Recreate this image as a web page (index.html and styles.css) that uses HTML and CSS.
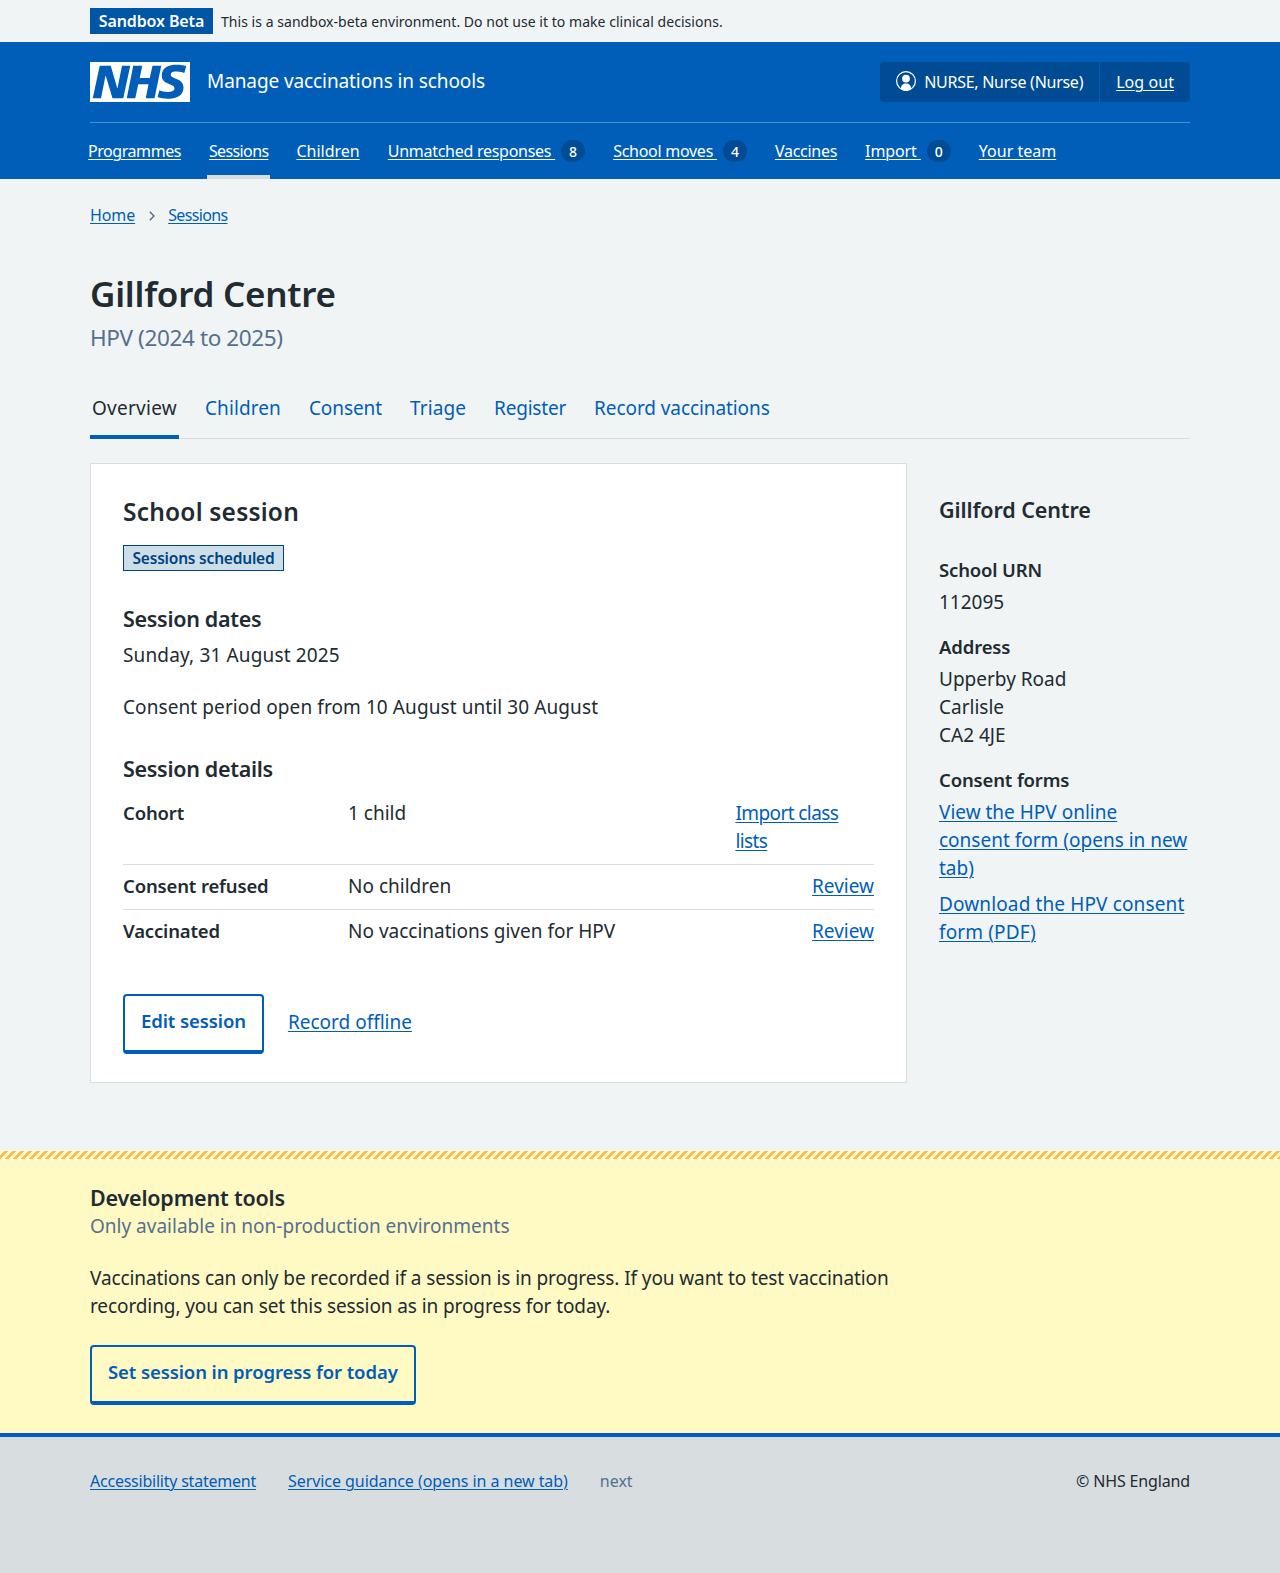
FILE: index.html
```html
<!DOCTYPE html>
<html lang="en">
<head>
<meta charset="utf-8">
<title>Gillford Centre – Manage vaccinations in schools</title>
<link rel="stylesheet" href="styles.css">
</head>
<body>
<div class="environment">
  <div class="container environment-row">
    <strong class="environment-tag">Sandbox Beta</strong>
    <span class="environment-text">This is a sandbox-beta environment. Do not use it to make clinical decisions.</span>
  </div>
</div>

<header class="header">
  <div class="container">
    <div class="header-row">
      <a class="header-brand" href="#">
        <svg class="logo" viewBox="0 0 40 16" width="100" height="40" role="img" aria-label="NHS">
          <path fill="#fff" d="M0 0h40v16H0z"/>
          <path fill="#005eb8" d="M3.9 1.5h4.4l2.6 9h.1l1.8-9h3.3l-2.8 13H9l-2.7-9h-.1l-1.8 9H1.1M17.3 1.5h3.6l-1 4.9h4L25 1.5h3.5l-2.7 13h-3.5l1.1-5.6h-4.1l-1.2 5.6h-3.4M37.7 4.4c-.7-.3-1.6-.6-2.9-.6-1.4 0-2.5.2-2.5 1.3 0 1.8 5.1 1.2 5.1 5.1 0 3.6-3.3 4.5-6.4 4.5-1.3 0-2.9-.3-4-.7l.8-2.7c.7.4 2.1.7 3.2.7s2.8-.2 2.8-1.5c0-2.1-5.1-1.3-5.1-5 0-3.4 2.9-4.4 5.8-4.4 1.6 0 3.1.2 4 .6"/>
        </svg>
        <span class="service-name">Manage vaccinations in schools</span>
      </a>
      <div class="account">
        <span class="account-item">
          <svg class="account-icon" viewBox="0 0 20 20" width="20" height="20" aria-hidden="true">
            <circle cx="10" cy="10" r="9.4" fill="none" stroke="#fff" stroke-width="1.2"/>
            <circle cx="10" cy="7.6" r="3.9" fill="#fff"/>
            <path fill="#fff" d="M5 18.4v-1.2c0-2.7 2.1-4.7 5-4.7s5 2 5 4.7v1.2c-1.400.8-3.200 1.300-5 1.300s-3.600-.5-5-1.300z"/>
          </svg>
          <span class="account-name">NURSE, Nurse (Nurse)</span>
        </span>
        <a class="account-item account-link" href="#">Log out</a>
      </div>
    </div>
    <ul class="nav">
      <li class="nav-item"><a class="nav-link nav-programmes" href="#">Programmes</a></li>
      <li class="nav-item nav-current"><a class="nav-link nav-sessions" href="#">Sessions</a></li>
      <li class="nav-item"><a class="nav-link" href="#">Children</a></li>
      <li class="nav-item"><a class="nav-link nav-unmatched" href="#">Unmatched responses </a><span class="count">8</span></li>
      <li class="nav-item"><a class="nav-link nav-moves" href="#">School moves </a><span class="count">4</span></li>
      <li class="nav-item"><a class="nav-link nav-vaccines" href="#">Vaccines</a></li>
      <li class="nav-item"><a class="nav-link nav-import" href="#">Import </a><span class="count">0</span></li>
      <li class="nav-item"><a class="nav-link" href="#">Your team</a></li>
    </ul>
  </div>
</header>

<main class="container main">
  <nav class="breadcrumb">
    <a href="#">Home</a>
    <svg class="chevron" viewBox="0 0 6 10" width="6" height="10" aria-hidden="true"><path d="M.8.8 5 5 .8 9.200" fill="none" stroke="#4c6272" stroke-width="1.300"/></svg>
    <a class="crumb-sessions" href="#">Sessions</a>
  </nav>

  <h1 class="title">Gillford Centre</h1>
  <p class="caption">HPV (2024 to 2025)</p>

  <ul class="tabs">
    <li><a class="tab tab-current" href="#">Overview</a></li>
    <li><a class="tab" href="#">Children</a></li>
    <li><a class="tab tab-tight" href="#">Consent</a></li>
    <li><a class="tab" href="#">Triage</a></li>
    <li><a class="tab tab-register" href="#">Register</a></li>
    <li><a class="tab tab-tight" href="#">Record vaccinations</a></li>
  </ul>

  <div class="columns">
    <section class="card">
      <h2 class="card-title">School session</h2>
      <strong class="status">Sessions scheduled</strong>
      <h3 class="heading dates-heading">Session dates</h3>
      <p class="date">Sunday, 31 August 2025</p>
      <p class="consent">Consent period open from 10 August until 30 August</p>
      <h3 class="heading details-heading">Session details</h3>
      <dl class="summary">
        <div class="summary-row"><dt>Cohort</dt><dd>1 child</dd><dd class="summary-action"><a class="import-link" href="#">Import class lists</a></dd></div>
        <div class="summary-row"><dt>Consent refused</dt><dd>No children</dd><dd class="summary-action"><a href="#">Review</a></dd></div>
        <div class="summary-row"><dt>Vaccinated</dt><dd>No vaccinations given for HPV</dd><dd class="summary-action"><a href="#">Review</a></dd></div>
      </dl>
      <div class="actions">
        <a class="button" href="#">Edit session</a>
        <a href="#">Record offline</a>
      </div>
    </section>

    <aside class="sidebar">
      <h2 class="heading sidebar-heading">Gillford Centre</h2>
      <dl class="facts">
        <dt>School URN</dt>
        <dd>112095</dd>
        <dt>Address</dt>
        <dd>Upperby Road<br>Carlisle<br>CA2 4JE</dd>
        <dt>Consent forms</dt>
        <dd><a href="#">View the HPV online consent form (opens in new tab)</a></dd>
        <dd class="second-form"><a class="download" href="#">Download the HPV consent form (PDF)</a></dd>
      </dl>
    </aside>
  </div>
</main>

<section class="devtools">
  <div class="container">
    <h2 class="heading devtools-heading">Development tools</h2>
    <p class="devtools-note">Only available in non-production environments</p>
    <p class="devtools-text">Vaccinations can only be recorded if a session is in progress. If you want to test vaccination recording, you can set this session as in progress for today.</p>
    <a class="button" href="#">Set session in progress for today</a>
  </div>
</section>

<footer class="footer">
  <div class="container footer-row">
    <a class="footer-accessibility" href="#">Accessibility statement</a>
    <a class="footer-guidance" href="#">Service guidance (opens in a new tab)</a>
    <span class="footer-version">next</span>
    <span class="footer-copyright">© NHS England</span>
  </div>
</footer>
</body>
</html>
```
FILE: styles.css
```css
:root {
  --blue: #005eb8;
  --dark-blue: #004b93;
  --text: #212b32;
  --secondary: #55708f;
  --border: #d8dde0;
}

* { box-sizing: border-box; }

body {
  margin: 0;
  min-height: 1573px;
  display: flex;
  flex-direction: column;
  background: #f0f4f5;
  color: var(--text);
  font: 400 19px/28px "Noto Sans", "Open Sans", sans-serif;
}

h1, h2, h3, p, ul, dl, dd { margin: 0; padding: 0; }
ul { list-style: none; }
a { color: var(--blue); text-decoration: underline; text-decoration-thickness: 1px; text-underline-offset: 2px; text-decoration-skip-ink: auto; }

.container { width: 1100px; margin: 0 auto; }

.environment-row { display: flex; align-items: center; gap: 8px; height: 42px; }
.environment-tag {
  width: 123px;
  height: 26px;
  background: #0055a5;
  color: #fff;
  font-size: 16px;
  font-weight: 600;
  line-height: 26px;
  letter-spacing: -.12px;
  text-align: center;
}
.environment-text { padding-top: 1px; font-size: 14px; letter-spacing: .04px; }

.header { height: 137px; padding-top: 20px; background: var(--blue); color: #fff; }
.header a { color: #fff; }
.header-row { display: flex; justify-content: space-between; height: 40px; }
.header .header-brand { display: flex; gap: 17px; text-decoration: none; }
.logo { display: block; }
.service-name { line-height: 38px; letter-spacing: -.1px; }

.account { display: flex; border-radius: 4px; background: var(--dark-blue); font-size: 16px; line-height: 40px; }
.account-item { display: flex; align-items: center; gap: 8px; padding: 0 16px; letter-spacing: -.27px; }
.account-icon { margin-bottom: 2px; }
.account-link { border-left: 1px solid var(--blue); letter-spacing: .06px; }

.nav { display: flex; gap: 24px; height: 57px; margin: 20px -4px 0; font-size: 16px; }
.header .container { position: relative; }
.nav::before { content: ""; position: absolute; left: 0; right: 0; top: 60px; height: 1px; background: #4693d1; }
.nav-item { display: flex; align-items: center; padding: 4px 2px 0; border-bottom: 4px solid transparent; }
.nav-current { border-color: var(--border); }
.nav-link { white-space: pre; }
.nav-programmes { letter-spacing: -.44px; }
.nav-sessions, .crumb-sessions { letter-spacing: -.63px; }
.nav-unmatched, .nav-moves, .nav-vaccines { letter-spacing: -.27px; }
.nav-import { letter-spacing: -.1px; }
.count { width: 24px; height: 22px; margin-left: 6px; border-radius: 12px; background: var(--dark-blue); font-size: 14px; font-weight: 500; line-height: 23px; text-align: center; }

.main { flex: 1; padding-top: 24px; }
.breadcrumb { display: flex; align-items: center; font-size: 16px; line-height: 24px; letter-spacing: -.1px; }
.chevron { margin: 1px 13px 0 14px; }

.title { margin-top: 47px; font-size: 35px; font-weight: 600; line-height: 40px; letter-spacing: -.25px; }
.caption { margin-top: 8px; color: var(--secondary); font-size: 22.5px; line-height: 32px; letter-spacing: -.38px; }

.tabs { display: flex; gap: 24px; margin-top: 40px; box-shadow: inset 0 -1px var(--border); }
.tab { display: block; height: 45px; padding: 0 2px; border-bottom: 4px solid transparent; text-decoration: none; letter-spacing: .1px; }
.tab-current { border-color: var(--blue); color: var(--text); letter-spacing: .26px; }
.tab-tight { letter-spacing: -.08px; }
.tab-register { letter-spacing: -.21px; }

.columns { display: grid; grid-template-columns: 817px 251px; gap: 32px; align-items: start; margin-top: 24px; }
.card { padding: 32px 32px 28px; border: 1px solid var(--border); background: #fff; }
.card-title { margin-bottom: 17px; font-size: 24.5px; font-weight: 600; line-height: 32px; letter-spacing: .2px; }
.status {
  display: block;
  width: 161px;
  height: 26px;
  border: 1px solid #004281;
  background: #ccdfe9;
  color: #004281;
  font-size: 15.5px;
  font-weight: 600;
  line-height: 24px;
  letter-spacing: -.2px;
  text-align: center;
}
.heading { font-size: 21.5px; font-weight: 600; line-height: 28px; letter-spacing: -.3px; }
.dates-heading { margin: 34px 0 8px; }
.consent { margin: 24px 0 34px; letter-spacing: .09px; }
.date { letter-spacing: .15px; }
.summary { margin-top: 9px; }
.summary-row { display: grid; grid-template-columns: 225px 1fr auto; padding: 7px 0 9px; border-bottom: 1px solid var(--border); }
.summary-row:last-child { border-bottom: 0; }
dt { font-size: 18.5px; font-weight: 600; letter-spacing: -.15px; }
.import-link { letter-spacing: -.59px; margin-right: -.5px; }

.actions { display: flex; align-items: center; gap: 24px; margin-top: 40px; }
.actions > a:last-child { padding-bottom: 4px; }
.button {
  display: inline-block;
  height: 60px;
  padding: 11px 16px 0;
  border: 2px solid var(--blue);
  border-bottom-width: 4px;
  border-radius: 4px;
  font-size: 18.5px;
  font-weight: 600;
  letter-spacing: -.1px;
  text-decoration: none;
}

.sidebar { padding-top: 33px; }
.sidebar-heading { margin-bottom: 32px; letter-spacing: -.1px; }
.facts dt { margin-top: 17px; }
.facts dt:first-child { margin-top: 0; }
.facts dd { margin-top: 4px; }
.facts .second-form { margin-top: 8px; }
.download { letter-spacing: .13px; }

.devtools {
  height: 282px;
  padding-top: 33px;
  background: linear-gradient(135deg, transparent 25%, #f7bd55 25% 50%, transparent 50% 75%, #f7bd55 75%) 0 0 / 8px 8px repeat-x #fff9c4;
}
.devtools-heading { letter-spacing: -.2px; }
.devtools-note { color: var(--secondary); }
.devtools-text { width: 817px; margin: 24px 0 25px; letter-spacing: -.1px; }

.footer { height: 140px; padding-top: 32px; border-top: 4px solid var(--blue); background: var(--border); font-size: 16px; line-height: 24px; }
.footer { height: 140px; }
.footer-row { display: flex; gap: 32px; }
.footer-accessibility { letter-spacing: -.23px; }
.footer-guidance { letter-spacing: -.06px; }
.footer-version { color: var(--secondary); }
.footer-copyright { margin-left: auto; letter-spacing: -.15px; }
```
